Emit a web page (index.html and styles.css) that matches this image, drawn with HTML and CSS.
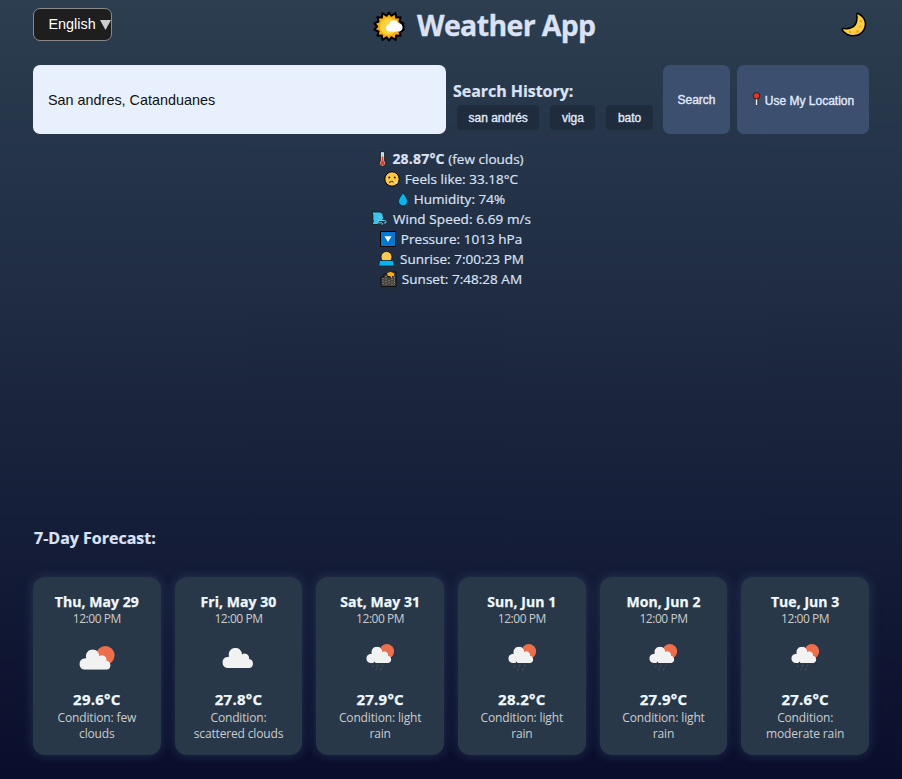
FILE: index.html
```html
<!DOCTYPE html>
<html lang="en">
<head>
<meta charset="utf-8">
<title>Weather App</title>
<link rel="stylesheet" href="styles.css">
</head>
<body>
<svg class="defs" aria-hidden="true">
  <symbol id="cloud" viewBox="0 0 32 20"><path d="M5.500 20A5.600 5.600 0 0 1 5.300 8.900Q6.100 8.600 7.200 8.700A6.600 6.600 0 1 1 20 6.600a4.400 4.400 0 0 1 7 4.400A4.600 4.600 0 0 1 27.500 20Z" fill="#f2f2f2"/></symbol>
  <symbol id="few" viewBox="0 0 36 24"><circle cx="26.300" cy="9.300" r="9.300" fill="#ec6e4c"/><use href="#cloud" x="0" y="3.500" width="32.500" height="20.300"/></symbol>
  <symbol id="rain" viewBox="0 0 28 28"><circle cx="20.800" cy="7.300" r="7.300" fill="#ec6e4c"/><use href="#cloud" x="0" y="2.700" width="26" height="16.300"/><g stroke="#46504f" stroke-width="1.200" stroke-linecap="round"><path d="M8.200 18.300l.5.300" stroke="#28323c"/><path d="M7 21.800l-.8 1.200M12 21l-1 2M17 20.800l-.8 1M10.500 25l-.5 1M15.200 24.500l-.8 1.600"/></g></symbol>
</svg>
<main class="app">
  <header class="header">
    <div class="language"><span>English</span><svg width="11" height="10" viewBox="0 0 11 10"><path d="M0 0h11L5.500 10z" fill="#ccc"/></svg></div>
    <h1 class="title">
      <svg width="32" height="31" viewBox="0 0 32 31"><path d="M16 1.500l2.300 3.300L22.500 2l.6 4.500 4.500-.2-1.200 4.200 4.200 1.800-2.800 3.200 2.800 3.200-4.200 1.800 1.200 4.200-4.500-.2-.6 4.500-4.200-2.800L16 29.500l-2.300-3.300L9.500 29l-.6-4.500-4.500.2 1.200-4.200-4.200-1.800 2.800-3.200-2.800-3.200 4.200-1.800-1.200-4.200 4.500.2L9.500 2l4.200 2.800z" fill="#ffad00" stroke="#000" stroke-width="2" stroke-linejoin="round"/><circle cx="15.500" cy="15.500" r="8.500" fill="#ffd43b"/><path d="M16 20.500a3.700 3.700 0 0 1 0-7.300 5 5 0 0 1 9.500-1 4.300 4.300 0 0 1 1.500 8.300z" fill="#fff"/><path d="M27 11.500a5 5 0 0 1 .5 9.500" fill="none" stroke="#000" stroke-width="1.800"/></svg>
      <span>Weather App</span>
    </h1>
    <svg class="moon" width="26" height="26" viewBox="0 0 26 26"><path d="M17.200 1.500C24 5 26.500 12 22.500 18.500 18 25.500 7 25.500 1.500 18.500c-.8-1.500 0-2.300 1.300-2 5.200.6 9-.5 11.500-4 1.800-3 2-6 1.500-9.500 0-1.500.4-2 1.400-1.500z" fill="#ffcf40" stroke="#000" stroke-width="1.500"/><g fill="#e9a91a"><circle cx="20" cy="9" r="1.300"/><circle cx="16.500" cy="19.500" r="1.600"/><circle cx="9" cy="20" r="1.200"/><circle cx="19" cy="14.500" r="1"/></g></svg>
  </header>

  <section class="search">
    <div class="field">San andres, Catanduanes</div>
    <div class="history">
      <h3 class="history-title">Search History:</h3>
      <div class="chips"><span class="chip">san andrés</span><span class="chip">viga</span><span class="chip">bato</span></div>
    </div>
    <button class="btn btn-search"><span>Search</span></button>
    <button class="btn btn-location"><svg width="9" height="15" viewBox="0 0 9 15"><path d="M3.300 6h2.400v7.500H3.300z" fill="#eee" stroke="#222" stroke-width=".7"/><circle cx="4.500" cy="3.800" r="3.200" fill="#e03a20" stroke="#111" stroke-width=".8"/></svg><span>Use My Location</span></button>
  </section>

  <section class="current">
    <p><svg width="9" height="16" viewBox="0 0 9 16"><path d="M2.400 2.500a2.100 2.100 0 0 1 4.200 0V10a3 3 0 1 1-4.200 0z" fill="#fff" stroke="#000" stroke-width=".8"/><path d="M4.500 1.500v4" stroke="#8fd8ee" stroke-width="2"/><path d="M4.500 5.500v7" stroke="#e43b2e" stroke-width="2"/><circle cx="4.500" cy="12.200" r="2.200" fill="#e43b2e"/></svg><span class="temp"><b>28.87°C</b> (few clouds)</span></p>
    <p><svg width="16" height="16" viewBox="0 0 16 16"><circle cx="8" cy="8" r="7.200" fill="#ffc83d" stroke="#000"/><circle cx="5.200" cy="6.500" r="1" fill="#222"/><circle cx="10.800" cy="6.500" r="1" fill="#222"/><path d="M5 11.500q2.500-2 5-.5" fill="none" stroke="#222"/><path d="M9.500 10l4 2.200" stroke="#eee" stroke-width="1.300"/></svg><span>Feels like: 33.18°C</span></p>
    <p><svg width="12" height="16" viewBox="0 0 12 16"><path d="M6 1.300c1.500 3.500 4.500 5.800 4.500 9a4.500 4.500 0 0 1-9 0C1.500 7.100 4.500 4.800 6 1.300z" fill="#00b7f0" stroke="#0b2230" stroke-width=".8"/></svg><span>Humidity: 74%</span></p>
    <p class="wind"><svg width="17" height="16" viewBox="0 0 17 16"><path d="M1 1h7c2.800 0 4.500 2 4.200 4.500l1 1.800-1.500 1 .2 2-3.900.5-1 2.700H1l1.500-3.500C1 8.500 3 5 1 1z" fill="#3cc4e8" stroke="#111" stroke-width=".8"/><path d="M9 5v2M7 9.500h6.500q2 .3 1.500 2.200-1.200 1-2-.2M7 11.800h4q1.500.8 0 2" fill="none" stroke="#75cfe4"/></svg><span>Wind Speed: 6.69 m/s</span></p>
    <p><svg width="16" height="16" viewBox="0 0 16 16"><path d="M.5.500h15v15H.5z" fill="#0078d7" stroke="#000"/><path d="M4.500 5.200h7L8 11z" fill="#fff"/></svg><span>Pressure: 1013 hPa</span></p>
    <p><svg width="17" height="16" viewBox="0 0 17 16"><circle cx="8.500" cy="6" r="5.500" fill="#ffc850" stroke="#111" stroke-width=".8"/><path d="M1.500 9.500h14l.8 5.500H.7z" fill="#00b7f0" stroke="#0b2230" stroke-width=".8"/></svg><span>Sunrise: 7:00:23 PM</span></p>
    <p><svg width="17" height="16" viewBox="0 0 17 16"><path d="M1 15.500V6h3V3h4v3h4V1h4v14.500z" fill="#48443f" stroke="#111"/><path d="M7 2.500a4 3 0 0 1 7 0v2.500h-2v2.500l-2-2.500H8z" fill="#ffb000"/><path d="M3 7v7M6 5v9M9 9v5M12 8v6M14.500 6v8" stroke="#a59b83" stroke-dasharray="1 1.500"/></svg><span>Sunset: 7:48:28 AM</span></p>
  </section>

  <section class="forecast">
    <h3 class="forecast-title">7-Day Forecast:</h3>
    <div class="cards">
      <article class="card"><h4>Thu, May 29</h4><time>12:00 PM</time><div class="icon"><svg width="36" height="24"><use href="#few"/></svg></div><strong>29.6°C</strong><p>Condition: few<br>clouds</p></article>
      <article class="card"><h4>Fri, May 30</h4><time>12:00 PM</time><div class="icon"><svg width="32" height="20"><use href="#cloud"/></svg></div><strong>27.8°C</strong><p>Condition:<br>scattered clouds</p></article>
      <article class="card"><h4>Sat, May 31</h4><time>12:00 PM</time><div class="icon"><svg width="28" height="28"><use href="#rain"/></svg></div><strong>27.9°C</strong><p>Condition: light<br>rain</p></article>
      <article class="card"><h4>Sun, Jun 1</h4><time>12:00 PM</time><div class="icon"><svg width="28" height="28"><use href="#rain"/></svg></div><strong>28.2°C</strong><p>Condition: light<br>rain</p></article>
      <article class="card"><h4>Mon, Jun 2</h4><time>12:00 PM</time><div class="icon"><svg width="28" height="28"><use href="#rain"/></svg></div><strong>27.9°C</strong><p>Condition: light<br>rain</p></article>
      <article class="card"><h4>Tue, Jun 3</h4><time>12:00 PM</time><div class="icon"><svg width="28" height="28"><use href="#rain"/></svg></div><strong>27.6°C</strong><p>Condition:<br>moderate rain</p></article>
    </div>
  </section>
</main>
</body>
</html>
```
FILE: styles.css
```css
* { box-sizing: border-box; margin: 0; padding: 0; }
body {
  height: 779px;
  overflow: hidden;
  background: linear-gradient(to bottom, #2c3e50, #0a0e2c);
  color: #dbe2f5;
  font-family: "Open Sans", "Noto Sans", sans-serif;
}
.defs { display: none; }
svg { flex: none; }
.app { display: flex; flex-direction: column; height: 779px; padding: 8px 33px 24px; }

.header { display: flex; align-items: flex-start; justify-content: space-between; height: 57px; }
.language {
  display: flex; align-items: center; justify-content: space-between;
  width: 79px; height: 33px; padding: 0 0 1px 14.500px;
  border: 1px solid #8a8a8a; border-radius: 7px;
  background: #1e1e1e; color: #fff;
  font: 14.400px "Liberation Sans", sans-serif;
}
.language svg { margin-top: 2px; }
.title { display: flex; align-items: center; gap: 12px; height: 36px; margin-left: 261px; margin-right: auto; }
.title span { width: 180px; font-size: 28.500px; line-height: 35px; height: 36px; letter-spacing: -0.650px; white-space: nowrap; -webkit-text-stroke: 0.300px; }
.moon { margin: 4px 2px 0 0; }

.search { display: flex; height: 69px; }
.field {
  display: flex; align-items: center; width: 413px; padding-left: 15px;
  border-radius: 7px; background: #e8f0fe; color: #111;
  font: 14.400px "Liberation Sans", sans-serif;
}
.history { width: 217px; padding: 16px 0 0 7px; }
.history-title { height: 24px; font-size: 16px; line-height: 21px; letter-spacing: -0.050px; white-space: nowrap; -webkit-text-stroke: 0.200px; }
.chips { display: flex; gap: 11px; padding-left: 4px; }
.chip {
  height: 25px; padding: 1px 11.500px 0; border-radius: 4px; background: #1f2c3d; color: #e2eafc;
  font: 12px/24px "Liberation Sans", sans-serif; -webkit-text-stroke: 0.350px;
}
.btn {
  display: flex; align-items: center; justify-content: center; gap: 4px;
  border: 0; border-radius: 7px; background: #3c4f6f; color: #e2eafc;
  font: 12px "Liberation Sans", sans-serif; -webkit-text-stroke: 0.350px; white-space: nowrap;
}
.btn-search { width: 67px; margin-right: 7px; }
.btn-location { width: 132px; }
.btn-location span { padding-top: 2px; }

.current { display: flex; flex-direction: column; align-items: center; padding-top: 15px; height: 390px; }
.current p { display: flex; align-items: center; gap: 5px; height: 20px; font-size: 13.500px; white-space: nowrap; letter-spacing: 0.030px; -webkit-text-stroke: 0.200px; }
.current .wind { letter-spacing: 0.100px; }
.current .temp { line-height: 18px; padding-bottom: 1px; }
.current b { font-size: 14px; letter-spacing: 0.200px; }

.forecast-title { height: 53px; font-size: 16px; line-height: 28px; padding-left: 1px; -webkit-text-stroke: 0.200px; }
.cards { display: grid; grid-template-columns: repeat(6, 1fr); gap: 14px; }
.card {
  display: flex; flex-direction: column; align-items: center; height: 178px; padding-top: 15px;
  border-radius: 12px; background: #283848; color: #f0f8ff; white-space: nowrap;
  box-shadow: 0 0 12px rgba(95, 125, 165, 0.300);
}
.card h4 { font-size: 14px; line-height: 20px; letter-spacing: 0.060px; -webkit-text-stroke: 0.250px; }
.card time { color: #ccc; font-size: 12px; line-height: 14px; letter-spacing: -0.450px; }
.icon { display: flex; align-items: center; justify-content: center; height: 63px; }
.card strong { font-size: 15px; line-height: 20px; letter-spacing: 0.250px; -webkit-text-stroke: 0.250px; }
.card p { color: #ccc; font-size: 12px; line-height: 16px; padding-top: 1px; text-align: center; letter-spacing: -0.150px; }
```
